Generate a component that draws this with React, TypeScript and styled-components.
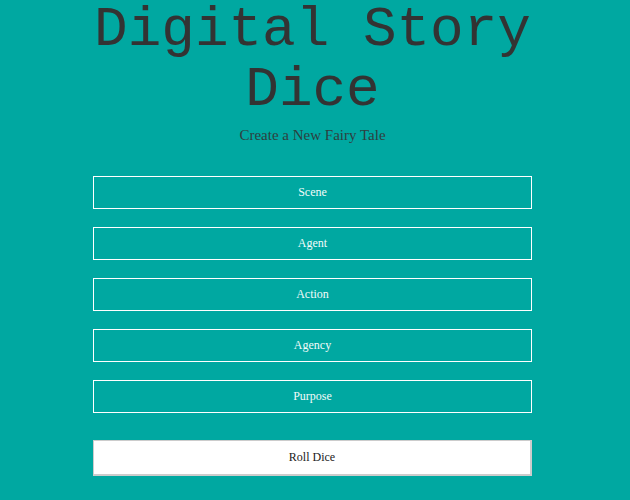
import React from "react";
import styled, { createGlobalStyle } from "styled-components";

const GlobalStyle = createGlobalStyle`
  html, body {
    margin: 0;
    padding: 0;
    background: #00a8a1;
  }
  body {
    font-family: "Liberation Serif", "Times New Roman", serif;
  }
`;

const Page = styled.main`
  width: 625px;
  display: flex;
  flex-direction: column;
  align-items: center;
`;

const Title = styled.h1`
  margin: 0;
  font-family: "Liberation Mono", "Courier New", monospace;
  font-weight: normal;
  font-size: 56px;
  line-height: 60px;
  color: #333;
  text-align: center;
  width: 480px;
`;

const Subtitle = styled.p`
  margin: 7px 0 0;
  font-size: 15px;
  line-height: 17px;
  color: #2e3f3f;
`;

const Form = styled.div`
  margin-top: 32px;
  width: 439px;
  display: flex;
  flex-direction: column;
  gap: 18px;
`;

const Field = styled.div`
  box-sizing: border-box;
  height: 33px;
  border: 1px solid #fff;
  display: flex;
  align-items: center;
  justify-content: center;
  font-size: 12px;
  color: #f2fbfa;
`;

const RollButton = styled.button`
  box-sizing: border-box;
  margin-top: 9px;
  height: 36px;
  width: 100%;
  background: #fff;
  border: 2px solid #cccccc;
  border-top-width: 1px;
  border-left-width: 1px;
  font-family: "Liberation Serif", "Times New Roman", serif;
  font-size: 12px;
  color: #222;
  cursor: pointer;
`;

const fields = ["Scene", "Agent", "Action", "Agency", "Purpose"];

export default function App() {
  return (
    <>
      <GlobalStyle />
      <Page>
        <Title>Digital Story Dice</Title>
        <Subtitle>Create a New Fairy Tale</Subtitle>
        <Form>
          {fields.map((f) => (
            <Field key={f}>{f}</Field>
          ))}
          <RollButton>Roll Dice</RollButton>
        </Form>
      </Page>
    </>
  );
}
